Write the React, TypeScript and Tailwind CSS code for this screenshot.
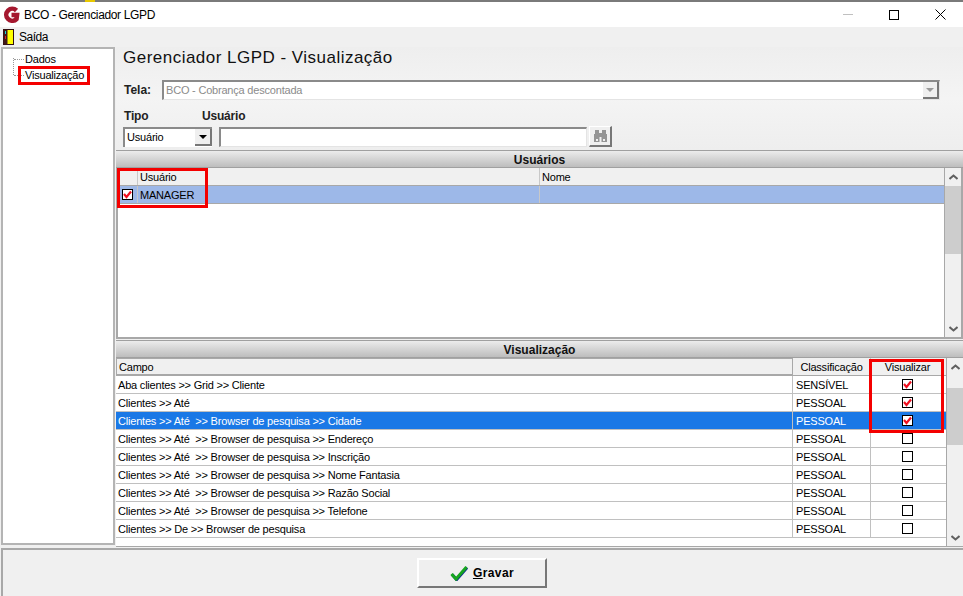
const FONT = "font-['Liberation_Sans',Arial,sans-serif]";

const campos = [
  { campo: "Aba clientes >> Grid >> Cliente", tipo: "SENSÍVEL", ok: true },
  { campo: "Clientes >> Até", tipo: "PESSOAL", ok: true },
  { campo: "Clientes >> Até  >> Browser de pesquisa >> Cidade", tipo: "PESSOAL", ok: true, sel: true },
  { campo: "Clientes >> Até  >> Browser de pesquisa >> Endereço", tipo: "PESSOAL", ok: false },
  { campo: "Clientes >> Até  >> Browser de pesquisa >> Inscrição", tipo: "PESSOAL", ok: false },
  { campo: "Clientes >> Até  >> Browser de pesquisa >> Nome Fantasia", tipo: "PESSOAL", ok: false },
  { campo: "Clientes >> Até  >> Browser de pesquisa >> Razão Social", tipo: "PESSOAL", ok: false },
  { campo: "Clientes >> Até  >> Browser de pesquisa >> Telefone", tipo: "PESSOAL", ok: false },
  { campo: "Clientes >> De >> Browser de pesquisa", tipo: "PESSOAL", ok: false },
];

function Check({ on }: { on: boolean }) {
  return (
    <span className="w-[11px] h-[11px] border border-black bg-white flex items-center justify-center">
      {on && (
        <svg width="9" height="9" viewBox="0 0 9 9">
          <path d="M1 4 L3.5 7 L8 1.5" fill="none" stroke="#f01020" strokeWidth="2.2" />
        </svg>
      )}
    </span>
  );
}

function Arrow({ up }: { up?: boolean }) {
  return (
    <svg width="9" height="6" viewBox="0 0 9 6">
      <path d={up ? "M0.5 5 L4.5 1.5 L8.5 5" : "M0.5 1 L4.5 4.5 L8.5 1"} fill="none" stroke="#606060" strokeWidth="2" />
    </svg>
  );
}

function ScrollBar({ thumbTop, thumbH }: { thumbTop: string; thumbH: string }) {
  return (
    <div className="w-[16px] shrink-0 flex flex-col items-center bg-[#f0f0f0]">
      <div className="h-[18px] flex items-center justify-center shrink-0"><Arrow up /></div>
      <div className="flex-1 w-full">
        <div className={`w-full bg-[#cdcdcd] ${thumbTop} ${thumbH}`} />
      </div>
      <div className="h-[17px] flex items-center justify-center shrink-0"><Arrow /></div>
    </div>
  );
}

function BandTitle({ children }: { children: string }) {
  return (
    <div className="h-[18px] border-t border-b border-[#a0a0a0] bg-gradient-to-b from-[#ececec] to-[#bdbdbd] text-center text-[12px] leading-[18px] tracking-normal font-bold text-[#111]">
      {children}
    </div>
  );
}

export default function App() {
  return (
    <div className={`relative w-[963px] h-[596px] overflow-hidden bg-[#f0f0f0] text-[11px] tracking-[-0.2px] text-black ${FONT}`}>
      {/* faixa da janela de trás */}
      <div className="relative h-[2px] bg-[#7a7a7a]">
        <div className="absolute left-[85px] top-0 w-[10px] h-[2px] bg-[#e8c800]" />
      </div>

      {/* barra de título */}
      <div className="h-[25px] bg-white flex items-center">
        <svg className="ml-[3px]" width="17" height="17" viewBox="0 0 17 17">
          <path d="M13.5 4.5 A6 6 0 1 0 13.5 13 L14 9 H8.5" fill="none" stroke="#a5182f" strokeWidth="4.6" />
        </svg>
        <span className="ml-[4px] text-[12px] tracking-[-0.35px]">BCO - Gerenciador LGPD</span>
        <div className="ml-auto flex items-center">
          <div className="w-[46px] flex justify-center"><div className="w-[10px] h-px bg-[#c0c0c0]" /></div>
          <div className="w-[46px] flex justify-center"><div className="w-[10px] h-[10px] border border-black" /></div>
          <div className="w-[46px] flex justify-center">
            <svg width="11" height="11" viewBox="0 0 11 11"><path d="M0.5 0.5 L10.5 10.5 M10.5 0.5 L0.5 10.5" stroke="#000" /></svg>
          </div>
        </div>
      </div>

      {/* menu */}
      <div className="h-[20px] flex items-center pl-[3px] gap-[5px] text-[12px] tracking-[-0.5px]">
        <svg width="11" height="16" viewBox="0 0 11 16">
          <rect x="0.5" y="0.5" width="10" height="15" fill="#ffff00" stroke="#301010" />
          <rect x="0.5" y="0.5" width="4" height="15" fill="#401818" />
          <rect x="2" y="2" width="1" height="3" fill="#20d0d0" />
          <rect x="2" y="7" width="1" height="3" fill="#e02020" />
        </svg>
        <span>Saída</span>
      </div>

      <div className="h-[500px] flex">
        {/* árvore */}
        <div className="relative w-[114px] h-[498px] ml-px border-2 border-[#b4b4b4] bg-white pl-[11px] pt-[2px] shrink-0">
          <div className="absolute left-[10px] top-[9px] h-[17px] border-l border-dotted border-[#999]" />
          <div className="flex items-center h-[16px]"><span className="w-[10px] border-t border-dotted border-[#999]" /><span className="ml-[1px]">Dados</span></div>
          <div className="flex items-center h-[16px]"><span className="w-[10px] border-t border-dotted border-[#999]" /><span className="ml-[1px]">Visualização</span></div>
          <div className="absolute left-[15px] top-[17px] w-[72px] h-[19px] border-[3px] border-[#f40000]" />
        </div>

        {/* conteúdo */}
        <div className="flex-1 flex flex-col min-w-0 ml-px">
          <div className="h-[103px] bg-gradient-to-b from-[#eeeeee] via-[#f4f4f4] to-[#eeeeee] pl-[8px]">
            <div className="pt-[1px] h-[21px] -ml-px text-[17px] leading-[20px] tracking-[0.48px] text-[#111]">
              Gerenciador LGPD - Visualização
            </div>
            <div className="flex items-center mt-[12px] h-[20px]">
              <span className="font-bold text-[12px] w-[38px] text-[#222] tracking-normal">Tela:</span>
              <div className="w-[778px] h-[20px] border-t-2 border-l-2 border-[#8a8a8a] border-b border-r border-b-[#e4e4e4] border-r-[#e4e4e4] bg-white flex items-center pl-[2px] text-[#8b8b8b]">
                <span className="flex-1">BCO - Cobrança descontada</span>
                <div className="w-[16px] h-[17px] bg-[#efefef] border-r-2 border-b-2 border-[#777] flex items-center justify-center">
                  <svg width="8" height="4" viewBox="0 0 8 4"><path d="M0 0 H8 L4 4 Z" fill="#9a9a9a" /></svg>
                </div>
              </div>
            </div>
            <div className="flex mt-[7px] font-bold text-[12px] h-[17px] text-[#222]">
              <span className="w-[78px]">Tipo</span>
              <span>Usuário</span>
            </div>
            <div className="flex items-center mt-[2px] -ml-px">
              <div className="w-[89px] h-[20px] border-t-2 border-l-2 border-[#8a8a8a] bg-white flex items-center pl-[2px]">
                <span className="flex-1">Usuário</span>
                <div className="w-[17px] h-[17px] bg-[#efefef] border-r-2 border-b-2 border-[#777] flex items-center justify-center">
                  <svg width="8" height="4" viewBox="0 0 8 4"><path d="M0 0 H8 L4 4 Z" fill="#000" /></svg>
                </div>
              </div>
              <div className="ml-[7px] w-[368px] h-[20px] border-t-2 border-l-2 border-[#8a8a8a] border-b border-r border-b-[#e4e4e4] border-r-[#e4e4e4] bg-white" />
              <div className="ml-[2px] w-[23px] h-[21px] border-t border-l border-white border-r-2 border-b-2 border-r-[#777] border-b-[#777] bg-[#efefef] flex items-center justify-center">
                <svg width="15" height="12" viewBox="0 0 15 12">
                  <rect x="2" y="0" width="4" height="5" fill="#949494" />
                  <rect x="9" y="0" width="4" height="5" fill="#949494" />
                  <rect x="1" y="4" width="5.5" height="8" fill="#949494" />
                  <rect x="8.5" y="4" width="5.5" height="8" fill="#949494" />
                  <rect x="6" y="3" width="3" height="4" fill="#949494" />
                  <rect x="3" y="9" width="2" height="2" fill="#efefef" />
                  <rect x="10" y="9" width="2" height="2" fill="#efefef" />
                </svg>
              </div>
            </div>
          </div>

          {/* Usuários */}
          <BandTitle>Usuários</BandTitle>
          <div className="h-[171px] border-2 border-t-0 border-[#a8a8a8] bg-white flex">
            <div className="flex-1 min-w-0 border-r border-[#a8a8a8]">
              <div className="flex h-[18px] bg-[#f0f0f0] border-b border-[#a8a8a8]">
                <div className="w-[20px] border-r border-[#c8c8c8]" />
                <div className="w-[402px] pl-[2px] border-r border-[#c8c8c8] leading-[18px]">Usuário</div>
                <div className="flex-1 pl-[2px] leading-[18px]">Nome</div>
              </div>
              <div className="flex h-[18px] bg-[#9db8e8] border-b border-[#a8a8a8]">
                <div className="w-[20px] border-r border-[#c8c8c8] flex items-center justify-center"><Check on /></div>
                <div className="w-[402px] pl-[2px] border-r border-[#c8c8c8] leading-[19px]">MANAGER</div>
                <div className="flex-1" />
              </div>
            </div>
            <ScrollBar thumbTop="mt-0" thumbH="h-[68px]" />
          </div>

          {/* Visualização */}
          <div className="mt-[1px]"><BandTitle>Visualização</BandTitle></div>
          <div className="flex flex-1 min-h-0 border-b border-[#a8a8a8] bg-white">
            <div className="flex-1 min-w-0 border-r border-[#a8a8a8]">
              <div className="flex h-[18px] bg-[#f0f0f0] border-b border-[#a8a8a8]">
                <div className="w-[677px] pl-[2px] leading-[16px] border border-[#a8a8a8]">Campo</div>
                <div className="w-[78px] text-center leading-[18px] border-r border-[#c8c8c8]">Classificação</div>
                <div className="flex-1 text-center leading-[18px] pr-[2px]">Visualizar</div>
              </div>
              {campos.map((c) => (
                <div
                  key={c.campo}
                  className={`flex h-[18px] border-b border-[#c0c0c0] leading-[18px] ${c.sel ? "bg-[#1a78e6] text-white" : "bg-white"}`}
                >
                  <div className="w-[677px] pl-[2px] border-r border-[#c0c0c0] whitespace-pre">{c.campo}</div>
                  <div className="w-[78px] pl-[3px] border-r border-[#c0c0c0]">{c.tipo}</div>
                  <div className="flex-1 flex items-center justify-center pr-[2px]"><Check on={c.ok} /></div>
                </div>
              ))}
            </div>
            <ScrollBar thumbTop="mt-[12px]" thumbH="h-[57px]" />
          </div>
        </div>
      </div>

      {/* rodapé */}
      <div className="h-[49px] mt-[1px] ml-px border-t-2 border-l-2 border-[#a8a8a8] flex justify-center pt-[8px]">
        <button className="w-[130px] h-[30px] -ml-[2px] bg-[#efefef] border-t-2 border-l-2 border-white border-r-2 border-b-2 border-r-[#777] border-b-[#777] flex items-center justify-center gap-[5px] font-bold text-[12px] tracking-[0.4px]">
          <svg width="18" height="16" viewBox="0 0 18 16">
            <path d="M1.5 9 L6 14 L16.5 2" fill="none" stroke="#0a2a90" strokeWidth="3" transform="translate(0.6 0.6)" />
            <path d="M1.5 9 L6 14 L16.5 2" fill="none" stroke="#16a51e" strokeWidth="3" />
          </svg>
          <span><u>G</u>ravar</span>
        </button>
      </div>

      {/* destaques vermelhos */}
      <div className="absolute left-[117px] top-[168px] w-[91px] h-[40px] border-[3px] border-[#f40000]" />
      <div className="absolute left-[869px] top-[359px] w-[75px] h-[74px] border-[3px] border-[#f40000]" />
    </div>
  );
}
